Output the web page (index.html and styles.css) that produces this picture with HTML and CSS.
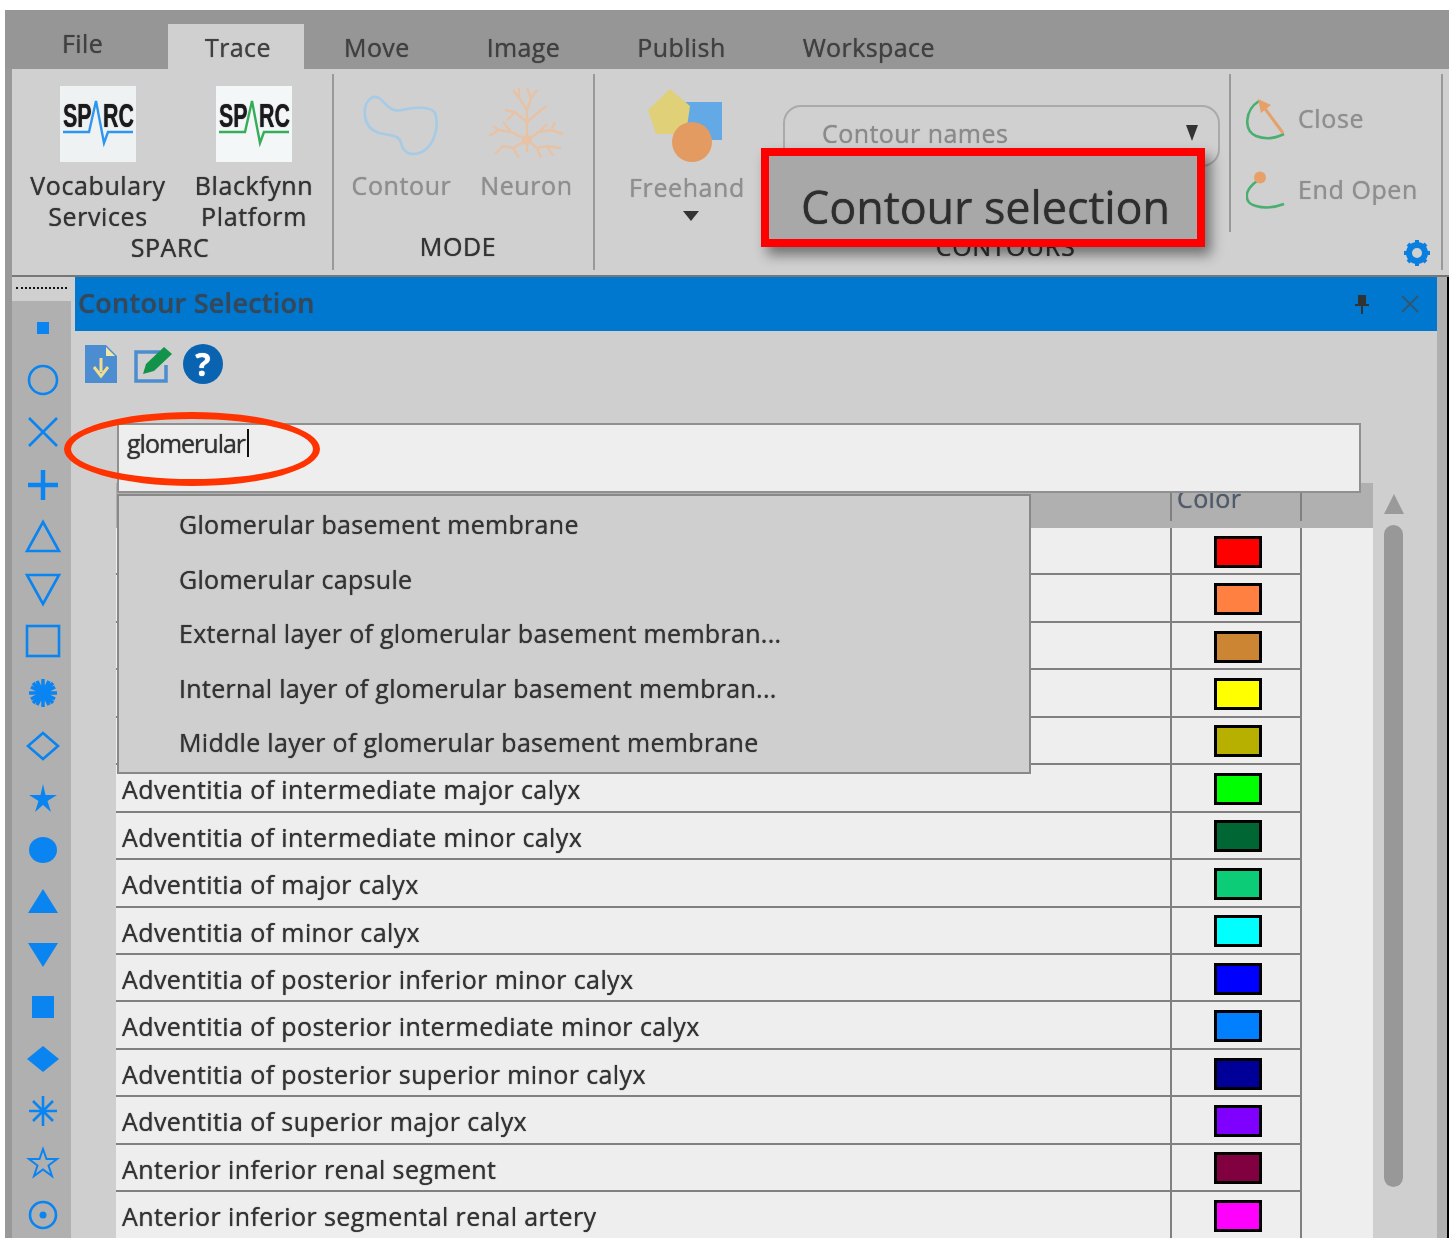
FILE: index.html
```html
<!DOCTYPE html>
<html lang="en">
<head>
  <meta charset="UTF-8">
  <title>Contour Selection</title>
  <link rel="stylesheet" href="styles.css">
</head>
<body>
  <div class="app">

    <div class="tabs">
      <div class="tab tab-file">File</div>
      <div class="tab tab-active">Trace</div>
      <div class="tab">Move</div>
      <div class="tab">Image</div>
      <div class="tab">Publish</div>
      <div class="tab">Workspace</div>
    </div>

    <div class="ribbon">
      <div class="group group-sparc">
        <div class="group-items">
          <div class="item item-sparc">
            <svg class="item-icon" width="76" height="76" viewBox="0 0 76 76">
              <rect width="76" height="76" fill="#eef2f3"/>
              <text class="logo-text" transform="translate(3 41) scale(.65 1)">SP</text>
              <text class="logo-text" transform="translate(43 41) scale(.65 1)">RC</text>
              <path d="M3 46H29L36 15L44 57L48 46H73" fill="none" stroke="#2f96f0" stroke-width="2.400"/>
            </svg>
            <div>Vocabulary<br>Services</div>
          </div>
          <div class="item item-sparc">
            <svg class="item-icon" width="76" height="76" viewBox="0 0 76 76">
              <rect width="76" height="76" fill="#f3f7f7"/>
              <text class="logo-text" transform="translate(3 41) scale(.65 1)">SP</text>
              <text class="logo-text" transform="translate(43 41) scale(.65 1)">RC</text>
              <path d="M3 46H29L36 15L44 57L48 46H73" fill="none" stroke="#35ad5a" stroke-width="2.400"/>
            </svg>
            <div>Blackfynn<br>Platform</div>
          </div>
        </div>
        <div class="caption caption-sparc">SPARC</div>
      </div>

      <div class="group group-mode">
        <div class="group-items">
          <div class="item item-mode item-off">
            <svg class="item-icon" width="76" height="76" viewBox="0 0 76 76">
              <path d="M1 30C-1 16 8 8 15 12C22 17 26 27 38 24C50 21 67 20 71 27C75 38 72 58 58 66C46 71 39 66 37 57C35 48 26 50 15 47C6 44 2 38 1 30Z" fill="none" stroke="#a6cbe6" stroke-width="2.600"/>
            </svg>
            <div>Contour</div>
          </div>
          <div class="item item-mode item-off">
            <svg class="item-icon" width="76" height="76" viewBox="0 0 76 76">
              <g fill="none" stroke="#e8c2a4" stroke-width="2.400">
                <path d="M38 54V24M38 24L30 12V2M30 12L24 4M38 24L42 12L38 2M42 12L48 4M38 36L26 26L16 24M26 26L18 34M38 36L52 24L58 20"/>
                <path d="M38 54L22 46L10 44L0 50M22 46L14 36M10 44L4 40M38 54L24 62L14 60L6 68M24 62L30 72M38 54L50 46L62 44L74 48M62 44L66 36M50 46L58 38M38 54L48 62L58 60L72 62M48 62L52 72M58 60L64 70M38 54V66"/>
              </g>
              <circle cx="38" cy="54" r="5" fill="#e8c2a4"/>
            </svg>
            <div>Neuron</div>
          </div>
        </div>
        <div class="caption caption-mode">MODE</div>
      </div>

      <div class="group group-contours">
        <div class="group-items">
          <div class="item item-freehand item-off">
            <svg class="item-icon" width="76" height="76" viewBox="0 0 76 76">
              <path d="M36 14H73V52H36Z" fill="#62a9e6"/>
              <path d="M21 1L41 18L37 46H7L-1 22Z" fill="#e0d078"/>
              <circle cx="43" cy="54" r="20" fill="#e39b62"/>
            </svg>
            <div>Freehand</div>
            <div class="down-arrow"></div>
          </div>
          <div class="combo">
            <span>Contour names</span>
            <div class="combo-arrow"></div>
          </div>
        </div>
        <div class="caption caption-contours">CONTOURS</div>
      </div>

      <div class="group group-close">
        <div class="close-rows">
          <div class="close-row">
            <svg width="40" height="42" viewBox="0 0 40 42">
              <path d="M13 3C-1 12 -3 32 10 38C20 42 30 40 38 36" fill="none" stroke="#4aae70" stroke-width="2.600"/>
              <path d="M37 35L17 8" fill="none" stroke="#e7a067" stroke-width="3"/>
              <path d="M12 1L25 7L15 15Z" fill="#e7a067"/>
            </svg>
            <span>Close</span>
          </div>
          <div class="close-row">
            <svg width="40" height="42" viewBox="0 0 40 42">
              <path d="M11 12C-3 22 -2 34 10 37C20 40 30 38 38 35" fill="none" stroke="#4aae70" stroke-width="2.600"/>
              <circle cx="14" cy="8.500" r="6" fill="#e7a067"/>
            </svg>
            <span>End Open</span>
          </div>
        </div>
        <svg class="gear" width="26" height="26" viewBox="0 0 26 26">
          <circle cx="13" cy="13" r="8" fill="none" stroke="#0a7fe0" stroke-width="6"/>
          <path d="M13 0V26M0 13H26M4 4L22 22M22 4L4 22" stroke="#0a7fe0" stroke-width="4" stroke-dasharray="5 16"/>
        </svg>
      </div>
    </div>

    <div class="main">
      <div class="tool-strip">
        <div class="grip"></div>
        <div class="shapes">
          <div class="shape"><svg width="40" height="40" viewBox="0 0 40 40"><rect class="fill" x="14" y="14" width="12" height="12"/></svg></div>
          <div class="shape"><svg width="40" height="40" viewBox="0 0 40 40"><circle class="line" cx="20" cy="20" r="14"/></svg></div>
          <div class="shape"><svg width="40" height="40" viewBox="0 0 40 40"><path class="line" d="M6 6L34 34M34 6L6 34"/></svg></div>
          <div class="shape"><svg width="40" height="40" viewBox="0 0 40 40"><path class="line thick" d="M20 5V35M5 20H35"/></svg></div>
          <div class="shape"><svg width="40" height="40" viewBox="0 0 40 40"><path class="line" d="M20 5L36 34H4Z"/></svg></div>
          <div class="shape"><svg width="40" height="40" viewBox="0 0 40 40"><path class="line" d="M4 6H36L20 35Z"/></svg></div>
          <div class="shape"><svg width="40" height="40" viewBox="0 0 40 40"><rect class="line" x="4" y="5" width="32" height="30"/></svg></div>
          <div class="shape"><svg width="40" height="40" viewBox="0 0 40 40"><path class="line spiky" d="M20 6V34M6 20H34M10 10L30 30M30 10L10 30M8 14L32 26M32 14L8 26M14 8L26 32M26 8L14 32"/></svg></div>
          <div class="shape"><svg width="40" height="40" viewBox="0 0 40 40"><path class="line" d="M20 7L35 20L20 33L5 20Z"/></svg></div>
          <div class="shape"><svg width="40" height="40" viewBox="0 0 40 40"><path class="fill" d="M20 6L22.500 17L34 17L24.500 23L28 34L20 27L12 34L15.500 23L6 17L17.500 17Z"/></svg></div>
          <div class="shape"><svg width="40" height="40" viewBox="0 0 40 40"><ellipse class="fill" cx="20" cy="20" rx="14" ry="13"/></svg></div>
          <div class="shape"><svg width="40" height="40" viewBox="0 0 40 40"><path class="fill" d="M20 7L35 31H5Z"/></svg></div>
          <div class="shape"><svg width="40" height="40" viewBox="0 0 40 40"><path class="fill" d="M5 9H35L20 33Z"/></svg></div>
          <div class="shape"><svg width="40" height="40" viewBox="0 0 40 40"><rect class="fill" x="9" y="9" width="22" height="22"/></svg></div>
          <div class="shape"><svg width="40" height="40" viewBox="0 0 40 40"><path class="fill" d="M20 7L36 20L20 33L4 20Z"/></svg></div>
          <div class="shape"><svg width="40" height="40" viewBox="0 0 40 40"><path class="line" d="M20 5V35M6 20H34M10 10L30 30M30 10L10 30"/></svg></div>
          <div class="shape"><svg width="40" height="40" viewBox="0 0 40 40"><path class="line thin" d="M20 6L23.500 16H34L25.500 22.500L29 33L20 26.500L11 33L14.500 22.500L6 16H16.500Z"/></svg></div>
          <div class="shape"><svg width="40" height="40" viewBox="0 0 40 40"><circle class="line" cx="20" cy="20" r="13"/><circle class="fill" cx="20" cy="20" r="3.500"/></svg></div>
        </div>
      </div>

      <div class="panel">
        <div class="title-bar">
          <span class="title-text">Contour Selection</span>
          <svg class="pin" width="18" height="22" viewBox="0 0 18 22">
            <path d="M5 2H13V11H16V13H10V21H8V13H2V11H5Z" fill="#333"/>
          </svg>
          <svg class="title-close" width="20" height="20" viewBox="0 0 20 20">
            <path d="M2 2L18 18M18 2L2 18" stroke="#33556f" stroke-width="1.800"/>
          </svg>
        </div>

        <div class="panel-tools">
          <svg width="32" height="38" viewBox="0 0 32 38">
            <path d="M0 0H21L32 11V38H0Z" fill="#4b8dd0"/>
            <path d="M21 2L30 11H21Z" fill="#f1e6a8"/>
            <path d="M16 13V27M9 22L16 31L23 22" fill="none" stroke="#efdc8e" stroke-width="3"/>
          </svg>
          <svg width="40" height="38" viewBox="0 0 40 38">
            <path d="M26 7H2V36H32V20" fill="none" stroke="#4b8dd0" stroke-width="3.500"/>
            <path d="M9 29L12 19L30 2L38 9L20 26Z" fill="#13924a"/>
          </svg>
          <div class="help">?</div>
        </div>

        <div class="search">
          <span>glomerular</span><span class="caret"></span>
        </div>

        <div class="table-wrap">
          <div class="table">
            <div class="row row-head">
              <div class="cell-name"></div>
              <div class="cell-color">Color</div>
            </div>
            <div class="row"><div class="cell-name"></div><div class="cell-color"><div class="swatch swatch-1"></div></div></div>
            <div class="row"><div class="cell-name"></div><div class="cell-color"><div class="swatch swatch-2"></div></div></div>
            <div class="row"><div class="cell-name"></div><div class="cell-color"><div class="swatch swatch-3"></div></div></div>
            <div class="row"><div class="cell-name"></div><div class="cell-color"><div class="swatch swatch-4"></div></div></div>
            <div class="row"><div class="cell-name"></div><div class="cell-color"><div class="swatch swatch-5"></div></div></div>
            <div class="row"><div class="cell-name">Adventitia of intermediate major calyx</div><div class="cell-color"><div class="swatch swatch-6"></div></div></div>
            <div class="row"><div class="cell-name">Adventitia of intermediate minor calyx</div><div class="cell-color"><div class="swatch swatch-7"></div></div></div>
            <div class="row"><div class="cell-name">Adventitia of major calyx</div><div class="cell-color"><div class="swatch swatch-8"></div></div></div>
            <div class="row"><div class="cell-name">Adventitia of minor calyx</div><div class="cell-color"><div class="swatch swatch-9"></div></div></div>
            <div class="row"><div class="cell-name">Adventitia of posterior inferior minor calyx</div><div class="cell-color"><div class="swatch swatch-10"></div></div></div>
            <div class="row"><div class="cell-name">Adventitia of posterior intermediate minor calyx</div><div class="cell-color"><div class="swatch swatch-11"></div></div></div>
            <div class="row"><div class="cell-name">Adventitia of posterior superior minor calyx</div><div class="cell-color"><div class="swatch swatch-12"></div></div></div>
            <div class="row"><div class="cell-name">Adventitia of superior major calyx</div><div class="cell-color"><div class="swatch swatch-13"></div></div></div>
            <div class="row"><div class="cell-name">Anterior inferior renal segment</div><div class="cell-color"><div class="swatch swatch-14"></div></div></div>
            <div class="row"><div class="cell-name">Anterior inferior segmental renal artery</div><div class="cell-color"><div class="swatch swatch-15"></div></div></div>
          </div>
          <div class="scrollbar">
            <div class="scroll-up"></div>
            <div class="scroll-thumb"></div>
          </div>
        </div>

        <div class="suggest">
          <div class="suggest-item">Glomerular basement membrane</div>
          <div class="suggest-item">Glomerular capsule</div>
          <div class="suggest-item">External layer of glomerular basement membran...</div>
          <div class="suggest-item">Internal layer of glomerular basement membran...</div>
          <div class="suggest-item">Middle layer of glomerular basement membrane</div>
        </div>
      </div>

      <div class="panel-side"></div>
    </div>

    <div class="callout">Contour selection</div>
    <div class="ring"></div>
  </div>
</body>
</html>
```

FILE: styles.css
```css
* {
  margin: 0;
  padding: 0;
  box-sizing: border-box;
}

body {
  background: #fff;
  font-family: "Open Sans", "Liberation Sans", sans-serif;
  color: #333;
  overflow: hidden;
}

.app {
  position: relative;
  width: 1444px;
  height: 1228px;
  margin: 10px 0 0 5px;
  background: #999;
  overflow: hidden;
  filter: blur(.5px);
  text-shadow: 0 0 1px;
}

/* tabs */
.tabs {
  display: flex;
  height: 59px;
  padding-top: 14px;
  background: #969696;
  font-size: 25px;
  letter-spacing: .4px;
  color: #404040;
}

.tab {
  line-height: 34px;
}

.tab-file {
  width: 163px;
  padding: 2px 0 0 57px;
}

.tab-active {
  width: 136px;
  padding: 6px 0 0 37px;
  background: #d0d0d0;
}

.tab:nth-child(n+3) {
  padding-top: 6px;
  margin-left: 40px;
  margin-right: 37px;
}

/* ribbon */
.ribbon {
  display: flex;
  height: 208px;
  margin-left: 7px;
  padding-top: 5px;
  background: #d0d0d0;
  border-bottom: 2px solid #777;
  font-size: 25px;
  letter-spacing: .6px;
  line-height: 31px;
  text-align: center;
}

.group {
  display: flex;
  flex-direction: column;
  height: 196px;
  border-right: 2px solid #999;
}

.group-items {
  display: flex;
  flex: 1;
}

.caption {
  height: 31px;
  margin-bottom: 8px;
}

.item-icon {
  display: block;
  margin: 0 auto 8px;
  overflow: visible;
}

.item-off {
  color: #8e8e8e;
}

.group-sparc {
  width: 322px;
  padding-left: 8px;
}

.item-sparc {
  width: 156px;
  padding-top: 12px;
}

.logo-text {
  font-family: "Liberation Sans", sans-serif;
  font-weight: 700;
  font-size: 33px;
  letter-spacing: 0;
  fill: #1a1a1a;
}

.caption-sparc {
  padding-right: 12px;
}

.group-mode {
  width: 261px;
  padding-left: 5px;
}

.item-mode {
  width: 125px;
  padding-top: 12px;
}

.caption-mode {
  padding-right: 16px;
}

.group-contours {
  width: 634px;
  border-right: 0;
}

.item-freehand {
  width: 184px;
  padding-top: 14px;
}

.down-arrow {
  width: 0;
  margin: 8px auto 0;
  border: 8px solid transparent;
  border-top: 10px solid #333;
  border-bottom: 0;
  transform: translateX(4px);
}

.combo {
  display: flex;
  align-items: center;
  justify-content: space-between;
  width: 437px;
  height: 62px;
  margin: 31px 0 0 4px;
  padding: 0 20px 6px 37px;
  border: 2px solid #aaa;
  border-radius: 18px;
  color: #8a8a8a;
  letter-spacing: .45px;
}

.combo-arrow {
  width: 0;
  border: 6px solid transparent;
  border-top: 16px solid #333;
  border-bottom: 0;
}

.caption-contours {
  padding-left: 187px;
}

.group-close {
  width: 214px;
}

.close-rows {
  height: 158px;
  padding: 9px 0 0 15px;
  border-left: 2px solid #999;
  color: #8e8e8e;
}

.close-row {
  display: flex;
  align-items: center;
  gap: 12px;
  height: 71px;
}

.gear {
  margin: 8px 0 0 175px;
}

/* main area */
.main {
  display: flex;
  height: 961px;
  margin-left: 7px;
  background: #cfcfcf;
}

.tool-strip {
  width: 59px;
  background: #b0b0b0;
}

.grip {
  height: 24px;
  padding: 10px 4px 0;
  background: #d0d0d0;
}

.grip::before {
  content: "";
  display: block;
  border-top: 2px dotted #111;
}

.shapes {
  padding: 1px 0 0 3px;
}

.shape {
  display: flex;
  align-items: center;
  justify-content: center;
  height: 52.200px;
}

.fill {
  fill: #0a84f0;
}

.line {
  fill: none;
  stroke: #0a84f0;
  stroke-width: 2.600;
}

.thick {
  stroke-width: 4.500;
}

.spiky {
  stroke-width: 3.500;
}

.thin {
  stroke-width: 2;
}

.panel {
  position: relative;
  width: 1366px;
  padding-left: 4px;
}

.panel-side {
  width: 12px;
  background: #b0b0b0;
  border-right: 2px solid #000;
}

.title-bar {
  display: flex;
  align-items: center;
  height: 54px;
  padding-left: 3px;
  background: #0078cf;
  font-size: 27px;
  font-weight: 600;
  letter-spacing: .25px;
  color: #35485a;
}

.title-text {
  flex: 1;
  padding-bottom: 4px;
}

.pin {
  margin-right: 29px;
}

.title-close {
  margin-right: 17px;
}

.panel-tools {
  display: flex;
  align-items: center;
  gap: 17px;
  height: 92px;
  padding: 0 0 26px 10px;
}

.help {
  width: 40px;
  height: 40px;
  margin-left: -8px;
  border-radius: 50%;
  background: #0a63b0;
  color: #fff;
  font-size: 32px;
  font-weight: 700;
  line-height: 40px;
  text-align: center;
}

.search {
  position: relative;
  z-index: 1;
  display: flex;
  width: 1244px;
  height: 70px;
  margin-left: 42px;
  padding: 1px 0 0 8px;
  background: #eee;
  border: 2px solid #909090;
  font-size: 25px;
  letter-spacing: -1px;
  line-height: 34px;
}

.caret {
  width: 2px;
  height: 28px;
  margin: 3px 0 0 2px;
  background: #111;
}

.table-wrap {
  display: flex;
  margin: -10px 0 0 41px;
}

.table {
  width: 1257px;
  background: #eee;
  font-size: 25px;
  letter-spacing: .4px;
}

.row {
  display: flex;
  height: 47.440px;
  border-bottom: 2px solid #808080;
  line-height: 48px;
}

.row-head {
  height: 45px;
  background: #b0b0b0;
  border-bottom: 0;
}

.row:not(.row-head) {
  width: 1186px;
}

.cell-name {
  width: 1054px;
  padding-left: 6px;
  white-space: nowrap;
}

.cell-color {
  display: flex;
  align-items: center;
  justify-content: center;
  width: 132px;
  border-left: 2px solid #808080;
  border-right: 2px solid #808080;
}

.row-head .cell-color {
  justify-content: flex-start;
  margin-bottom: 7px;
  padding: 0 0 9px 5px;
  color: #4f5a6a;
  line-height: 34px;
}

.swatch {
  width: 48px;
  height: 32px;
  border: 3px solid #000;
  transform: translate(2px, 1px);
}

.swatch-1 { background: #f00; }
.swatch-2 { background: #ff8040; }
.swatch-3 { background: #cc8533; }
.swatch-4 { background: #ff0; }
.swatch-5 { background: #b8b000; }
.swatch-6 { background: #0f0; }
.swatch-7 { background: #006633; }
.swatch-8 { background: #0ccc77; }
.swatch-9 { background: #0ff; }
.swatch-10 { background: #00f; }
.swatch-11 { background: #0080ff; }
.swatch-12 { background: #000099; }
.swatch-13 { background: #8000ff; }
.swatch-14 { background: #800040; }
.swatch-15 { background: #f0f; }

.scrollbar {
  width: 64px;
  padding: 11px 0 0 11px;
}

.scroll-up {
  width: 0;
  border: 10px solid transparent;
  border-bottom: 20px solid #9a9a9a;
  border-top: 0;
}

.scroll-thumb {
  width: 19px;
  height: 662px;
  margin-top: 11px;
  border-radius: 10px;
  background: #989898;
}

/* dropdown over the table */
.suggest {
  position: absolute;
  top: 217px;
  left: 46px;
  width: 914px;
  height: 280px;
  padding-top: 1px;
  background: #cfcfcf;
  border: 2px solid #888;
  z-index: 2;
  font-size: 25px;
  letter-spacing: .3px;
}

.suggest-item {
  height: 54.500px;
  padding-left: 60px;
  line-height: 54px;
}

/* annotations */
.callout {
  position: absolute;
  top: 138px;
  left: 756px;
  width: 444px;
  height: 99px;
  padding: 16px 0 0 32px;
  background: #a8a8a8;
  border: 8px solid #f00;
  box-shadow: 6px 8px 12px rgba(0, 0, 0, .45);
  color: #2e2e2e;
  font-size: 45px;
  letter-spacing: -.1px;
  line-height: 69px;
}

.ring {
  position: absolute;
  top: 402px;
  left: 59px;
  width: 256px;
  height: 74px;
  border: 7px solid #ff3300;
  border-radius: 50%;
  z-index: 3;
}
```
